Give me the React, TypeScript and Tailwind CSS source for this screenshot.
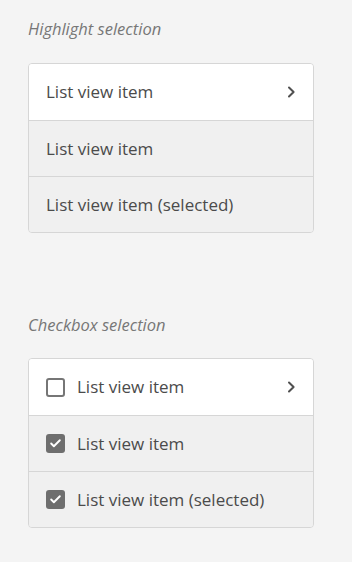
import { Check } from 'lucide-react';

type Row = { label: string; active?: boolean; chevron?: boolean; checked?: boolean };

const rows: Row[] = [
  { label: 'List view item', active: true, chevron: true },
  { label: 'List view item', checked: true },
  { label: 'List view item (selected)', checked: true },
];

function Chevron() {
  return (
    <svg width="9" height="12" viewBox="0 0 9 12" className="text-[#505050]">
      <path d="M2 1.5 L6.6 6 L2 10.5" fill="none" stroke="currentColor" strokeWidth="2" strokeLinecap="round" strokeLinejoin="round" />
    </svg>
  );
}

function Box({ checked }: { checked?: boolean }) {
  if (checked) {
    return (
      <span className="w-[19px] h-[19px] rounded-[3px] bg-[#6e6e6e] flex items-center justify-center shrink-0">
        <Check size={13} strokeWidth={3.5} className="text-white" />
      </span>
    );
  }
  return <span className="block w-[19px] h-[19px] rounded-[3px] border-2 border-[#767676] bg-white shrink-0" />;
}

function ListCard({ withBox }: { withBox?: boolean }) {
  return (
    <div className="w-[286px] rounded border border-[#d6d6d6] overflow-hidden">
      {rows.map((r, i) => (
        <div
          key={i}
          className={`h-[56px] flex items-center pl-[17px] pr-[17px] ${i > 0 ? 'border-t border-[#d6d6d6]' : ''} ${
            r.active ? 'bg-white' : 'bg-[#f0f0f0]'
          }`}
        >
          {withBox && (
            <span className="mr-[12px]">
              <Box checked={r.checked} />
            </span>
          )}
          <span className="flex-1 text-[17px] text-[#4b4b4b]">{r.label}</span>
          {r.chevron && <Chevron />}
        </div>
      ))}
    </div>
  );
}

export default function App() {
  return (
    <div className="min-h-[562px] bg-[#f4f4f4] pl-[28px] pt-[19px] font-['Open_Sans',sans-serif]">
      <p className="text-[16.5px] leading-[20px] italic text-[#777777]">Highlight selection</p>
      <div className="mt-[24px]">
        <ListCard />
      </div>
      <p className="mt-[82px] text-[16.5px] leading-[20px] italic text-[#777777]">Checkbox selection</p>
      <div className="mt-[23px]">
        <ListCard withBox />
      </div>
    </div>
  );
}
